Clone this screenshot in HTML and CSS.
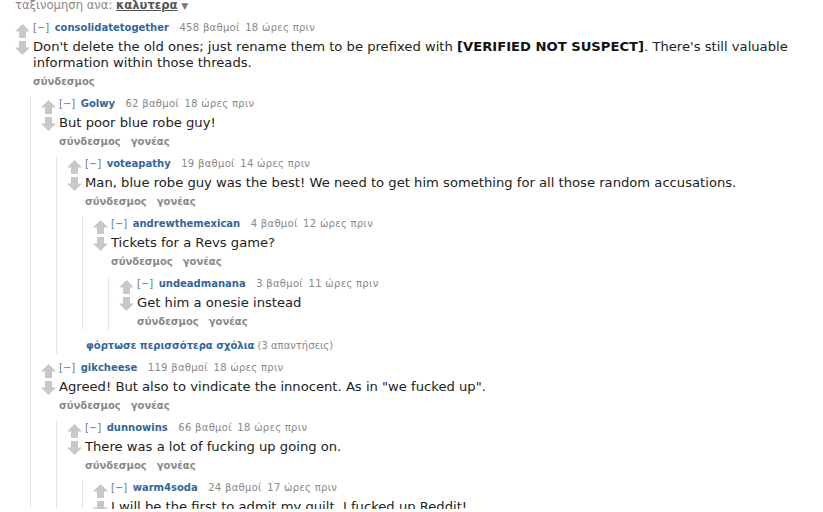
FILE: index.html
```html
<!DOCTYPE html>
<html>
<head>
    <title>σχόλια</title>
    <meta charset="utf-8">
    <link rel="stylesheet" href="styles.css">
</head>
<body>
    <div class="page">
        <div class="sort-menu">ταξινομηση ανα: <span class="sort-current">καλυτερα</span> <span class="sort-caret">&#9660;</span></div>

        <!-- top comment -->
        <div class="comment">
            <div class="row">
                <div class="midcol">
                    <svg class="arrow" viewBox="0 0 15 14"><path d="M7.5 0 L15 7.5 L11 7.5 L11 14 L4 14 L4 7.5 L0 7.5 Z"/></svg>
                    <svg class="arrow" viewBox="0 0 15 14"><path d="M7.5 14 L15 6.5 L11 6.5 L11 0 L4 0 L4 6.5 L0 6.5 Z"/></svg>
                </div>
                <div class="entry">
                    <div class="tagline"><span class="expand">[&minus;]</span> <span class="author">consolidatetogether</span> <span class="score">458 βαθμοί</span> 18 ώρες πριν</div>
                    <div class="md">Don't delete the old ones; just rename them to be prefixed with <strong>[VERIFIED NOT SUSPECT]</strong>. There's still valuable information within those threads.</div>
                    <div class="buttons"><span>σύνδεσμος</span></div>
                </div>
            </div>
            <div class="child">

                <div class="comment">
                    <div class="row">
                        <div class="midcol">
                            <svg class="arrow" viewBox="0 0 15 14"><path d="M7.5 0 L15 7.5 L11 7.5 L11 14 L4 14 L4 7.5 L0 7.5 Z"/></svg>
                            <svg class="arrow" viewBox="0 0 15 14"><path d="M7.5 14 L15 6.5 L11 6.5 L11 0 L4 0 L4 6.5 L0 6.5 Z"/></svg>
                        </div>
                        <div class="entry">
                            <div class="tagline"><span class="expand">[&minus;]</span> <span class="author">Golwy</span> <span class="score">62 βαθμοί</span> 18 ώρες πριν</div>
                            <div class="md">But poor blue robe guy!</div>
                            <div class="buttons"><span>σύνδεσμος</span><span>γονέας</span></div>
                        </div>
                    </div>
                    <div class="child">

                        <div class="comment">
                            <div class="row">
                                <div class="midcol">
                                    <svg class="arrow" viewBox="0 0 15 14"><path d="M7.5 0 L15 7.5 L11 7.5 L11 14 L4 14 L4 7.5 L0 7.5 Z"/></svg>
                                    <svg class="arrow" viewBox="0 0 15 14"><path d="M7.5 14 L15 6.5 L11 6.5 L11 0 L4 0 L4 6.5 L0 6.5 Z"/></svg>
                                </div>
                                <div class="entry">
                                    <div class="tagline"><span class="expand">[&minus;]</span> <span class="author">voteapathy</span> <span class="score">19 βαθμοί</span> 14 ώρες πριν</div>
                                    <div class="md">Man, blue robe guy was the best! We need to get him something for all those random accusations.</div>
                                    <div class="buttons"><span>σύνδεσμος</span><span>γονέας</span></div>
                                </div>
                            </div>
                            <div class="child">

                                <div class="comment">
                                    <div class="row">
                                        <div class="midcol">
                                            <svg class="arrow" viewBox="0 0 15 14"><path d="M7.5 0 L15 7.5 L11 7.5 L11 14 L4 14 L4 7.5 L0 7.5 Z"/></svg>
                                            <svg class="arrow" viewBox="0 0 15 14"><path d="M7.5 14 L15 6.5 L11 6.5 L11 0 L4 0 L4 6.5 L0 6.5 Z"/></svg>
                                        </div>
                                        <div class="entry">
                                            <div class="tagline"><span class="expand">[&minus;]</span> <span class="author">andrewthemexican</span> <span class="score">4 βαθμοί</span> 12 ώρες πριν</div>
                                            <div class="md">Tickets for a Revs game?</div>
                                            <div class="buttons"><span>σύνδεσμος</span><span>γονέας</span></div>
                                        </div>
                                    </div>
                                    <div class="child">

                                        <div class="comment">
                                            <div class="row">
                                                <div class="midcol">
                                                    <svg class="arrow" viewBox="0 0 15 14"><path d="M7.5 0 L15 7.5 L11 7.5 L11 14 L4 14 L4 7.5 L0 7.5 Z"/></svg>
                                                    <svg class="arrow" viewBox="0 0 15 14"><path d="M7.5 14 L15 6.5 L11 6.5 L11 0 L4 0 L4 6.5 L0 6.5 Z"/></svg>
                                                </div>
                                                <div class="entry">
                                                    <div class="tagline"><span class="expand">[&minus;]</span> <span class="author">undeadmanana</span> <span class="score">3 βαθμοί</span> 11 ώρες πριν</div>
                                                    <div class="md">Get him a onesie instead</div>
                                                    <div class="buttons"><span>σύνδεσμος</span><span>γονέας</span></div>
                                                </div>
                                            </div>
                                        </div>

                                    </div>
                                </div>

                            </div>
                        </div>

                        <div class="more"><span class="more-link">φόρτωσε περισσότερα σχόλια</span> (3 απαντήσεις)</div>
                    </div>
                </div>

                <div class="comment">
                    <div class="row">
                        <div class="midcol">
                            <svg class="arrow" viewBox="0 0 15 14"><path d="M7.5 0 L15 7.5 L11 7.5 L11 14 L4 14 L4 7.5 L0 7.5 Z"/></svg>
                            <svg class="arrow" viewBox="0 0 15 14"><path d="M7.5 14 L15 6.5 L11 6.5 L11 0 L4 0 L4 6.5 L0 6.5 Z"/></svg>
                        </div>
                        <div class="entry">
                            <div class="tagline"><span class="expand">[&minus;]</span> <span class="author">gikcheese</span> <span class="score">119 βαθμοί</span> 18 ώρες πριν</div>
                            <div class="md">Agreed! But also to vindicate the innocent. As in "we fucked up".</div>
                            <div class="buttons"><span>σύνδεσμος</span><span>γονέας</span></div>
                        </div>
                    </div>
                    <div class="child">

                        <div class="comment">
                            <div class="row">
                                <div class="midcol">
                                    <svg class="arrow" viewBox="0 0 15 14"><path d="M7.5 0 L15 7.5 L11 7.5 L11 14 L4 14 L4 7.5 L0 7.5 Z"/></svg>
                                    <svg class="arrow" viewBox="0 0 15 14"><path d="M7.5 14 L15 6.5 L11 6.5 L11 0 L4 0 L4 6.5 L0 6.5 Z"/></svg>
                                </div>
                                <div class="entry">
                                    <div class="tagline"><span class="expand">[&minus;]</span> <span class="author">dunnowins</span> <span class="score">66 βαθμοί</span> 18 ώρες πριν</div>
                                    <div class="md">There was a lot of fucking up going on.</div>
                                    <div class="buttons"><span>σύνδεσμος</span><span>γονέας</span></div>
                                </div>
                            </div>
                            <div class="child">

                                <div class="comment">
                                    <div class="row">
                                        <div class="midcol">
                                            <svg class="arrow" viewBox="0 0 15 14"><path d="M7.5 0 L15 7.5 L11 7.5 L11 14 L4 14 L4 7.5 L0 7.5 Z"/></svg>
                                            <svg class="arrow" viewBox="0 0 15 14"><path d="M7.5 14 L15 6.5 L11 6.5 L11 0 L4 0 L4 6.5 L0 6.5 Z"/></svg>
                                        </div>
                                        <div class="entry">
                                            <div class="tagline"><span class="expand">[&minus;]</span> <span class="author">warm4soda</span> <span class="score">24 βαθμοί</span> 17 ώρες πριν</div>
                                            <div class="md">I will be the first to admit my guilt. I fucked up Reddit!</div>
                                            <div class="buttons"><span>σύνδεσμος</span><span>γονέας</span></div>
                                        </div>
                                    </div>
                                </div>

                            </div>
                        </div>

                    </div>
                </div>

            </div>
        </div>
    </div>
</body>
</html>
```

FILE: styles.css
```css
body {
    font-family: "DejaVu Sans", Verdana, sans-serif;
    background-color: #fff;
    color: #222;
    margin: 0;
    padding: 0;
    overflow: hidden;
}
.page {
    padding: 0 0 0 15px;
    height: 512px;
}
.sort-menu {
    margin-top: -3px;
    margin-bottom: 6px;
    font-size: 11.6px;
    line-height: 16px;
    color: #888;
}
.sort-current {
    color: #555;
    font-weight: bold;
    text-decoration: underline;
}
.sort-caret {
    font-size: 9px;
    color: #777;
}
.comment {
    margin-bottom: 6px;
}
.row {
    display: flex;
    align-items: flex-start;
}
.midcol {
    width: 15px;
    margin-right: 3px;
    padding-top: 4px;
    display: flex;
    flex-direction: column;
    gap: 3px;
    flex-shrink: 0;
}
.arrow {
    width: 15px;
    height: 14px;
    display: block;
    fill: #c8c8c8;
}
.entry {
    flex: 1;
}
.tagline {
    font-size: 10px;
    line-height: 16px;
    color: #888;
    white-space: nowrap;
    letter-spacing: 0.3px;
}
.expand {
    color: #6b7a8a;
    margin-right: 2px;
    letter-spacing: 0;
}
.author {
    color: #369;
    font-weight: bold;
    margin-right: 7px;
    letter-spacing: 0;
}
.score {
    margin-right: 2px;
}
.md {
    margin-top: 3px;
    font-size: 13.15px;
    line-height: 16px;
    max-width: 780px;
    color: #222;
}
.md strong {
    color: #111;
}
.buttons {
    margin-top: 3px;
    font-size: 10px;
    line-height: 16px;
    font-weight: bold;
    color: #888;
    display: flex;
    gap: 10px;
}
.child {
    margin-left: 15px;
    padding-left: 10px;
    border-left: 1px solid #e6e6e6;
    margin-top: 6px;
}
.more {
    margin-left: 19px;
    padding-top: 2px;
    font-size: 10px;
    line-height: 16px;
    color: #888;
}
.more-link {
    color: #369;
    font-weight: bold;
}
```
